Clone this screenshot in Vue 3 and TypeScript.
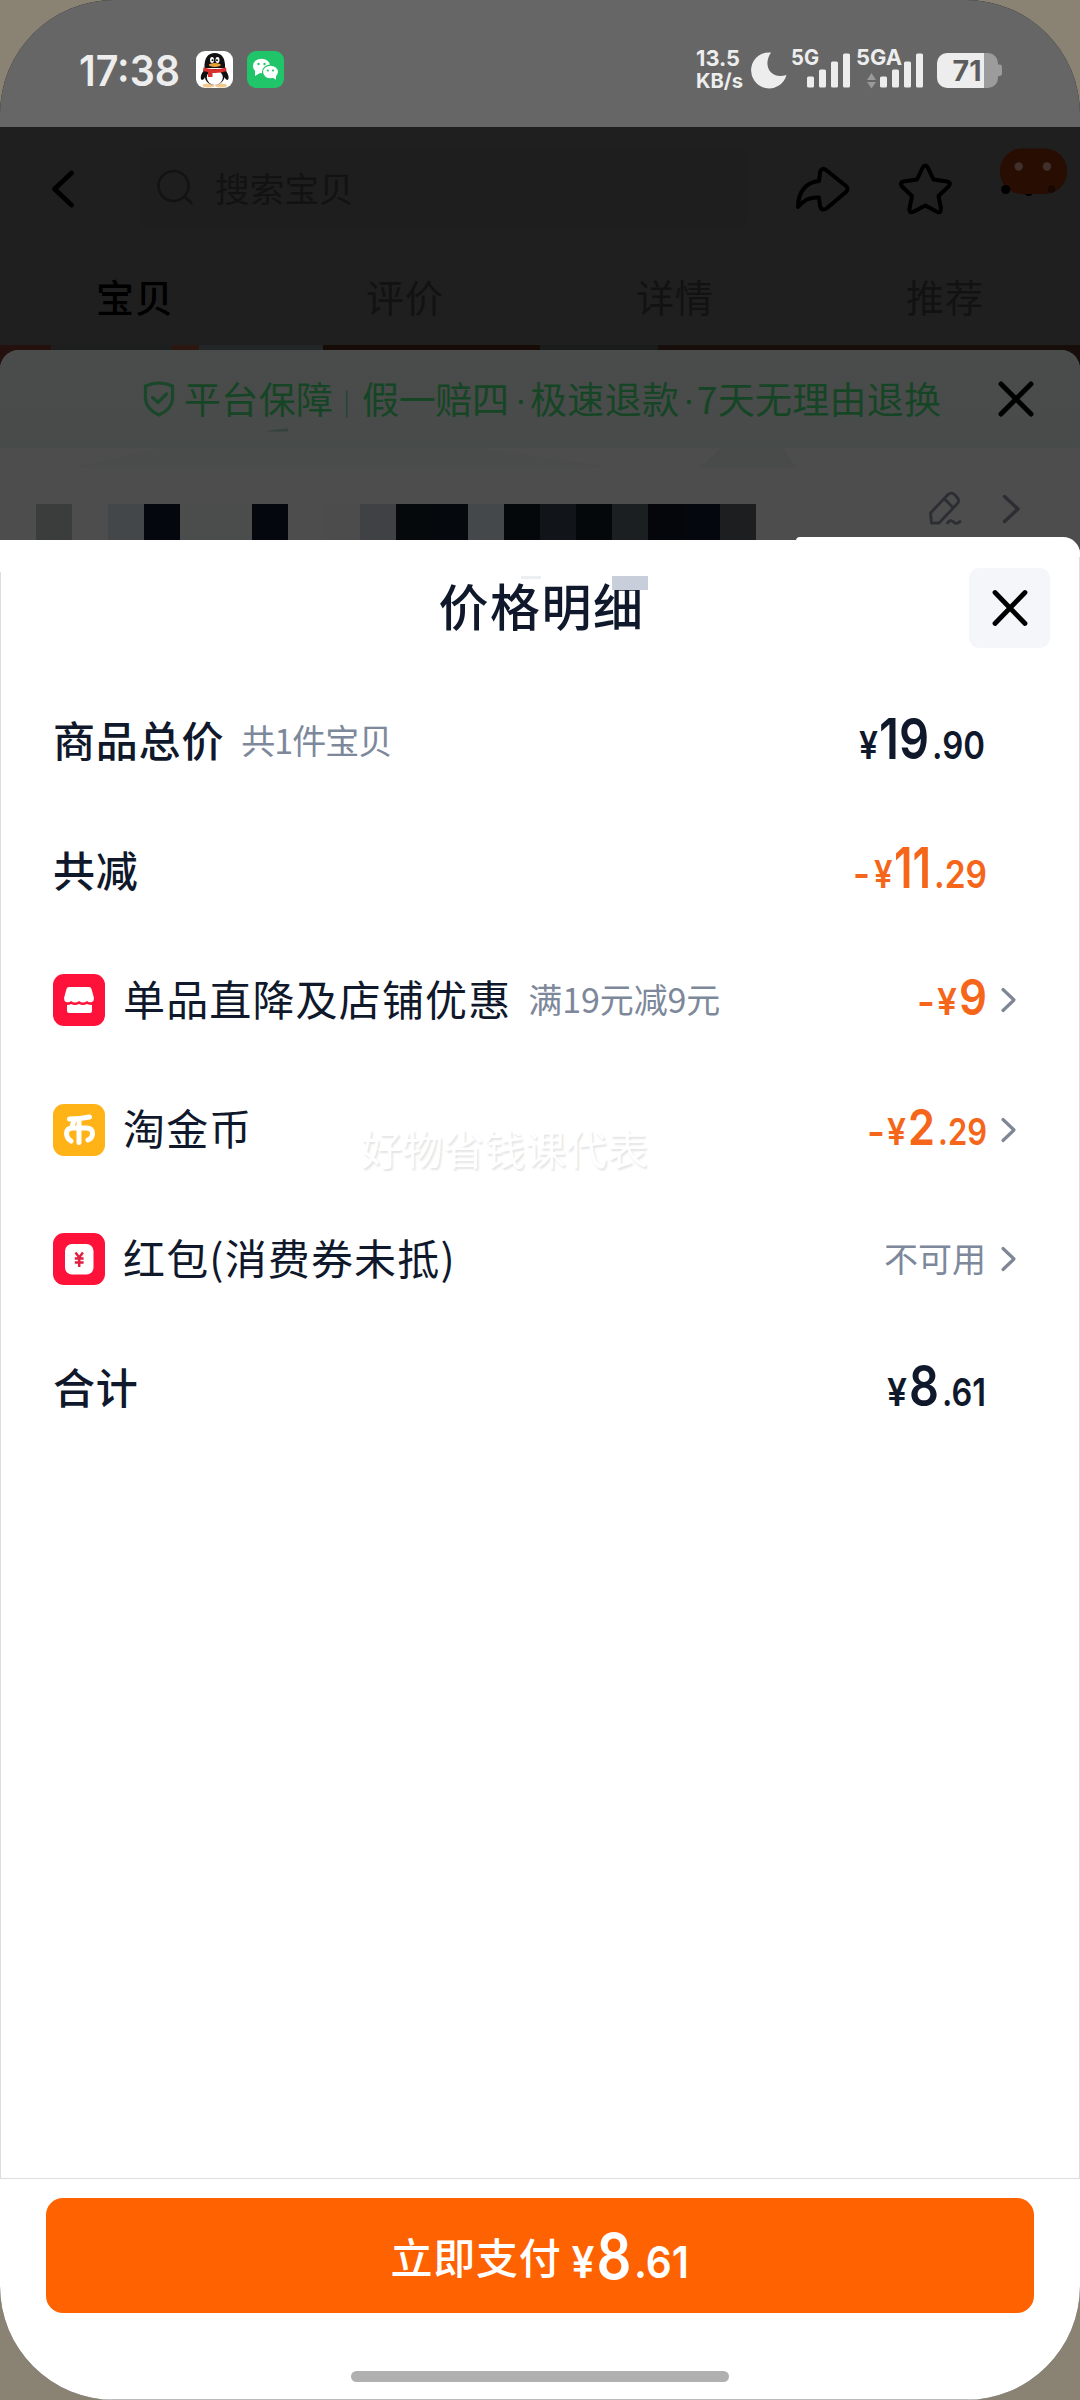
<script setup lang="ts">
interface Part {
  t: string
  x: number
  size: number
  len: number
}
interface Row {
  label: string
  note?: string
  noteGap?: string
  icon?: 'shop' | 'coin' | 'packet'
  strong?: boolean
  accent?: boolean
  arrow?: boolean
  state?: string
  base: number
  parts: Part[]
}

const tabs: string[] = ['宝贝', '评价', '详情', '推荐']

// x offsets of amount parts are measured inside a 150px wide slot
const rows: Row[] = [
  {
    label: '商品总价', note: '共1件宝贝', noteGap: '-0.9px', strong: true, base: 46.5,
    parts: [
      { t: '¥', x: 19, size: 38, len: 19 },
      { t: '19', x: 39, size: 56, len: 50 },
      { t: '.90', x: 92, size: 38, len: 53 }
    ]
  },
  {
    label: '共减', strong: true, accent: true, base: 46.5,
    parts: [
      { t: '-', x: 13, size: 38, len: 17 },
      { t: '¥', x: 34, size: 38, len: 18.5 },
      { t: '11', x: 54, size: 56, len: 37 },
      { t: '.29', x: 94, size: 38, len: 53 }
    ]
  },
  {
    label: '单品直降及店铺优惠', note: '满19元减9元', noteGap: '-0.1px', icon: 'shop', accent: true, arrow: true, base: 44.5,
    parts: [
      { t: '-', x: 77, size: 37, len: 18 },
      { t: '¥', x: 97, size: 37, len: 20 },
      { t: '9', x: 119, size: 50, len: 28 }
    ]
  },
  {
    label: '淘金币', icon: 'coin', accent: true, arrow: true, base: 44.5,
    parts: [
      { t: '-', x: 27, size: 37, len: 18 },
      { t: '¥', x: 47, size: 37, len: 19 },
      { t: '2', x: 68, size: 50, len: 27 },
      { t: '.29', x: 98, size: 37, len: 49 }
    ]
  },
  { label: '红包(消费券未抵)', icon: 'packet', arrow: true, state: '不可用', base: 43, parts: [] },
  {
    label: '合计', strong: true, base: 47,
    parts: [
      { t: '¥', x: 47, size: 38, len: 20 },
      { t: '8', x: 69, size: 57, len: 30 },
      { t: '.61', x: 102, size: 38, len: 44 }
    ]
  }
]

const mosaic: string[] = [
  'transparent', '#3b3d3c', 'transparent', '#43474a', '#05070e', '#4a4d4b', '#4b4d4c', '#05070e', '#4e4d4d', '#4d4c4d',
  '#404144', '#06090c', '#05080d', '#45484b', '#05080b', '#11151a', '#05080b', '#1c1f21', '#04060b', '#05070f', '#1c1e20'
]

const bars: number[] = [11, 18, 26, 34]
</script>

<template>
  <div class="backdrop">
    <div class="phone">
      <header class="status">
        <svg class="clock" width="104" height="50" viewBox="78 45 104 50">
          <text x="79" y="85.500" font-size="42" font-weight="600" textLength="101" lengthAdjust="spacingAndGlyphs">17:38</text>
        </svg>
        <svg class="app qq" width="37" height="37" viewBox="0 0 37 37">
          <rect width="37" height="37" rx="9" fill="#fff" />
          <ellipse cx="12.500" cy="34.500" rx="6" ry="2" fill="#f2c98d" />
          <ellipse cx="25" cy="34.500" rx="6" ry="2" fill="#f2c98d" />
          <path d="M9 18C4 24 4 28 6 29c2 0 3-3 3-3 0 4 4 8 9.500 8S28 30 28.500 26c0 0 1 3 3 3 2-1 1.500-6-3-11z" fill="#111" />
          <ellipse cx="18.800" cy="26.500" rx="8" ry="7.500" fill="#fff" />
          <path d="M8.500 17C8 7 12 2 18.800 2S29.500 7 29 17z" fill="#111" />
          <ellipse cx="16" cy="9" rx="2" ry="3" fill="#fff" /><ellipse cx="21.500" cy="9" rx="2" ry="3" fill="#fff" />
          <circle cx="16.500" cy="9.300" r="1" fill="#111" /><circle cx="21" cy="9.300" r="1" fill="#111" />
          <ellipse cx="18.800" cy="14" rx="6" ry="1.900" fill="#e9a03a" />
          <path d="M7.500 16.500q11.500 3.500 22.500 0l.5 3.500q-6 2.500-14 2v4h-4.500v-5q-3-.5-5-1z" fill="#d8302c" />
        </svg>
        <svg class="app wx" width="37" height="37" viewBox="0 0 37 37">
          <rect width="37" height="37" rx="9" fill="#1fc568" />
          <ellipse cx="14.500" cy="15" rx="8.600" ry="7.300" fill="#fff" /><path d="M8 19v6l5-3z" fill="#fff" />
          <circle cx="11.500" cy="13" r="1.200" fill="#1fc568" /><circle cx="17.500" cy="13" r="1.200" fill="#1fc568" />
          <ellipse cx="23.500" cy="21" rx="8" ry="6.900" fill="#fff" stroke="#1fc568" stroke-width="1.200" /><path d="M25 26l4 2.800v-5z" fill="#fff" />
          <circle cx="20.800" cy="19.500" r="1.100" fill="#1fc568" /><circle cx="26" cy="19.500" r="1.100" fill="#1fc568" />
        </svg>
        <svg class="signals" width="312" height="50" viewBox="695 43 312 50" fill="#ededed">
          <g font-size="22" font-weight="700">
            <text x="696" y="64.500" textLength="44" lengthAdjust="spacingAndGlyphs">13.5</text>
            <text x="696" y="87" font-size="20" textLength="47" lengthAdjust="spacingAndGlyphs">KB/s</text>
            <text x="791" y="64" textLength="28" lengthAdjust="spacingAndGlyphs">5G</text>
            <text x="856" y="64" textLength="46" lengthAdjust="spacingAndGlyphs">5GA</text>
          </g>
          <path d="M771 51.500A18 18 0 1 0 786.500 74C771 79 762 65 771 51.500z" />
          <rect v-for="(h, i) in bars" :key="'a' + i" :x="807 + i * 12" :y="86.500 - h" width="7" :height="h" rx="1.500" />
          <rect v-for="(h, i) in bars" :key="'b' + i" :x="880 + i * 12" :y="86.500 - h" width="7" :height="h" rx="1.500" />
          <path d="M871.500 72l4.500 7h-9zM871.500 87.500l4.500-6.500h-9z" fill="#9a9a9a" />
          <path d="M984 52h4a10 10 0 0 1 10 10v1.500h1.500a2.500 3 0 0 1 2.500 3v5.500a2.500 3 0 0 1-2.500 3H998v2a10 10 0 0 1-10 10h-4z" fill="#9c9c9c" />
          <path d="M947 52h37v35h-37a10 10 0 0 1-10-10V62a10 10 0 0 1 10-10z" />
          <text x="952.500" y="80" font-size="29" font-weight="700" fill="#5c5c5c" textLength="29" lengthAdjust="spacingAndGlyphs">71</text>
        </svg>
      </header>

      <nav class="topbar">
        <svg class="back" width="30" height="44" viewBox="48 167 30 44" fill="none" stroke="#000" stroke-width="4.800" stroke-linecap="round" stroke-linejoin="round"><path d="M71.500 173L54.500 189l17 16" /></svg>
        <div class="search">
          <svg width="38" height="38" viewBox="156 169 38 38" fill="none" stroke="#131313" stroke-width="2.600" stroke-linecap="round"><circle cx="173.500" cy="186" r="15" /><path d="M185 197l6.500 6" /></svg>
          <span>搜索宝贝</span>
        </div>
        <svg class="actions" width="280" height="80" viewBox="790 145 280 80" fill="none" stroke="#000" stroke-width="4" stroke-linejoin="round" stroke-linecap="round">
          <path d="M798 207C798 191 807 182 819 181L820 172Q822 167 826 170L846 186Q849 189 846 192L827 208Q822 212 820 206L819 197.500C809 197 804 200 798 207z" />
          <path d="M922.500 168Q925.500 163 928 168L933.500 179.500L947 181.500Q952 182.500 948.500 186.500L938.500 196L941 208.500Q941 214 936.500 211.500L925.300 205.500L914 211.500Q909 214 909.500 208.500L912 196L902 186.500Q899 182.500 903.500 181.500L917 179.500z" />
          <g stroke="none">
            <circle cx="1028.600" cy="191.500" r="4.600" fill="#000" />
            <rect x="1000" y="148.500" width="67" height="45.500" rx="22" fill="#280d03" />
            <circle cx="1005.700" cy="189.500" r="4.600" fill="#000" />
            <circle cx="1051.500" cy="189" r="3.800" fill="#180802" />
            <circle cx="1018.700" cy="166.500" r="4.200" fill="#40302b" />
            <circle cx="1047" cy="166.500" r="4.200" fill="#40302b" />
          </g>
        </svg>
      </nav>

      <div class="tabs">
        <span v-for="(tab, i) in tabs" :key="tab" :class="{ on: i === 0 }">{{ tab }}</span>
      </div>
      <div class="peek"><i class="p1" /><i class="p2" /><i class="p3" /><i class="p4" /><i class="p5" /><i class="p6" /><i class="p7" /></div>

      <section class="order">
        <div class="guarantee">
          <svg class="shield" width="32" height="38" viewBox="143 380 32 38" fill="none" stroke="#1a472a" stroke-width="3.200" stroke-linejoin="round" stroke-linecap="round">
            <path d="M145.500 386Q159 380 172.500 386V399Q172 409 159 415Q146 409 145.500 399z" /><path d="M152.500 397.500l5.500 5 8.500-8.500" />
          </svg>
          <svg class="promise" width="766" height="60" viewBox="182 368 766 60" fill="#164525">
            <text x="184" y="412.500" font-size="37" textLength="149">平台保障</text>
            <rect x="346" y="389" width="1.600" height="28" fill="#2a4535" />
            <text x="362" y="412.500" font-size="37" textLength="147">假一赔四</text>
            <circle cx="521" cy="401" r="2.200" />
            <text x="530" y="412.500" font-size="37" textLength="149">极速退款</text>
            <circle cx="689" cy="401" r="2.200" />
            <text x="697" y="412.500" font-size="37" textLength="244">7天无理由退换</text>
          </svg>
          <svg class="x" width="40" height="40" viewBox="-20 -20 40 40" stroke="#000" stroke-width="5" stroke-linecap="round"><path d="M-15-15L15 15M15-15L-15 15" /></svg>
        </div>
        <svg class="shapes" width="1080" height="42" viewBox="0 427 1080 42">
          <path d="M265 431.500l8-1.500 15-1.500v3z" fill="#34413d" />
          <path d="M74 467.500L160 448H482L607 467.500z" fill="#4a4c4b" />
          <path d="M700 467.500L722 448H783L796 467.500z" fill="#484b4a" />
        </svg>
        <div class="address">
          <div class="mosaic"><i v-for="(c, i) in mosaic" :key="i" :style="{ background: c }" /></div>
          <svg class="edit" width="96" height="36" viewBox="926 490 96 36" fill="none" stroke="#2c2e33" stroke-width="2.800" stroke-linecap="round" stroke-linejoin="round">
            <path d="M930.500 513L948 494.500Q951.500 491.500 955 495L957.500 498Q960 501 957 504L939 523H931.500zM945 499.500l8 8M947.500 523q3-4 6-1t6.500-.5" />
            <path d="M1004.500 496.500L1018 509l-13.500 12.500" stroke-width="3.400" />
          </svg>
        </div>
      </section>

      <main class="sheet">
        <div class="head">
          <h1>价格明细</h1>
          <i class="patch" /><i class="fleck" />
          <button class="close" type="button" aria-label="关闭">
            <svg width="40" height="40" viewBox="-20 -20 40 40" stroke="#000" stroke-width="4.800" stroke-linecap="round"><path d="M-15-15.500L15 15.500M15-15.500L-15 15.500" /></svg>
          </button>
        </div>

        <div v-for="row in rows" :key="row.label" class="row" :class="{ strong: row.strong, accent: row.accent }">
          <svg v-if="row.icon === 'shop'" class="badge" width="52" height="52" viewBox="0 0 52 52">
            <rect width="52" height="52" rx="11" fill="#ff1239" />
            <path d="M16 13h20q2 0 2.500 2l2.500 9q0 3-2 4-3 1-5-1-4 3-8 0-4 3-8 0-2 2-5 1-2-1-2-4l2.500-9q.5-2 2.500-2zM14 31q3 0 4-1 4 2 8 0 4 2 8 0 2 1 5 1v6q0 2-2 2H16q-2 0-2-2z" fill="#fff" />
          </svg>
          <svg v-else-if="row.icon === 'coin'" class="badge" width="52" height="52" viewBox="0 0 52 52">
            <rect width="52" height="52" rx="11" fill="#ffb317" />
            <g fill="none" stroke="#fff" stroke-width="5" stroke-linecap="round"><path d="M16.500 15Q27 15 36.500 13M26 15v23.500M18 37Q13.500 34 13.500 29.500 13.500 24 20 24H33Q39.500 24 39.500 29.500 39.500 34 35 36M21 16l-2 7" /></g>
          </svg>
          <svg v-else-if="row.icon === 'packet'" class="badge" width="52" height="52" viewBox="0 0 52 52">
            <rect width="52" height="52" rx="11" fill="#ff1239" /><rect x="12" y="11" width="28.500" height="30.500" rx="7" fill="#fff" />
            <path d="M22.500 19.500l3.700 5 3.700-5M26.200 24.500v9.500M21.800 25.500h8.800M21.800 29.500h8.800" fill="none" stroke="#e02142" stroke-width="2.500" />
          </svg>
          <span class="label">{{ row.label }}</span>
          <span v-if="row.note" class="note" :style="{ letterSpacing: row.noteGap }">{{ row.note }}</span>
          <span class="gap" />
          <span v-if="row.state" class="state">{{ row.state }}</span>
          <svg v-else class="amount" width="150" height="60" viewBox="0 0 150 60">
            <text v-for="p in row.parts" :key="p.t" :x="p.x" :y="row.base" :font-size="p.size" :textLength="p.len" lengthAdjust="spacingAndGlyphs">{{ p.t }}</text>
          </svg>
          <span class="tail">
            <svg v-if="row.arrow" width="18" height="28" viewBox="0 0 18 28" fill="none" stroke="#7f8696" stroke-width="3.200" stroke-linecap="round" stroke-linejoin="round"><path d="M3 3.500L14 14 3 24.500" /></svg>
          </span>
        </div>
        <div class="watermark">好物省钱课代表</div>
      </main>

      <footer class="foot">
        <button class="pay" type="button">
          <span>立即支付</span>
          <svg width="122" height="70" viewBox="570 2220 122 70" fill="#fff">
            <text x="571.500" y="2277" font-size="44" textLength="23" lengthAdjust="spacingAndGlyphs">¥</text>
            <text x="596.500" y="2277.500" font-size="63" textLength="35" lengthAdjust="spacingAndGlyphs">8</text>
            <text x="634" y="2277" font-size="44" textLength="55" lengthAdjust="spacingAndGlyphs">.61</text>
          </svg>
        </button>
        <div class="home" />
      </footer>
    </div>
  </div>
</template>

<style>
body { margin: 0; background: #8a8272; }
</style>

<style scoped>
* { box-sizing: border-box; }
.backdrop { width: 1080px; height: 2400px; background: #8a8273; font-family: "Noto Sans CJK SC", sans-serif; }
.phone { width: 1080px; height: 2400px; border-radius: 114px; overflow: hidden; background: #1f1f1f; display: flex; flex-direction: column; }
svg { display: block; flex: none; overflow: visible; }
i { display: block; }

.status { height: 127px; background: #666; display: flex; align-items: center; padding: 10px 73px 0 78px; font-family: Inter, sans-serif; }
.status .clock { fill: #ededed; margin-top: 3px; }
.qq { margin-left: 14px; margin-top: 2px; }
.wx { margin-left: 14px; margin-top: 2px; }
.signals { margin-left: auto; }

.topbar { height: 124px; display: flex; align-items: center; padding-left: 48px; }
.search { width: 606px; height: 80px; margin-left: 62px; padding-left: 16px; background: #1e1e1e; border-radius: 12px; display: flex; align-items: center; color: #121212; font-size: 34.500px; }
.search svg { margin-top: -2px; }
.search span { margin-left: 21px; margin-top: -5px; letter-spacing: .2px; }
.actions { margin-left: 44px; margin-top: -8px; }

.tabs { height: 94px; display: flex; color: #121212; font-size: 38px; line-height: 89px; letter-spacing: 1px; }
.tabs span { width: 270px; text-align: center; }
.tabs .on { color: #000; font-weight: 500; }

.peek { height: 5px; display: flex; }
.peek i { height: 24px; flex: none; }
.p1 { width: 51px; background: #24110e; }
.p2 { width: 121px; background: #1d1e1e; }
.p3 { width: 27px; background: #2c1710; }
.p4 { width: 124px; background: #222626; }
.p5 { width: 217px; background: #170b08; }
.p6 { width: 118px; background: #1a1b1b; }
.p7 { width: 422px; background: #170e0c; }

.order { position: relative; height: 190px; flex: none; background: #4d4d4d; border-radius: 19px 19px 0 0; overflow: hidden; display: flex; flex-direction: column; }
.guarantee { height: 98px; flex: none; background: linear-gradient(#4a4c4b, #474b4a); display: flex; align-items: center; padding-left: 143px; }
.promise { margin-left: 7px; }
.guarantee .x { margin-left: 48px; }
.shapes { margin-top: -21px; }
.address { display: flex; align-items: flex-end; justify-content: space-between; flex: 1; padding-right: 58px; }
.mosaic { display: flex; }
.mosaic i { width: 36px; height: 36px; }
.edit { margin-bottom: 14px; }

.sheet { position: relative; flex: 1; background: #fff; border-left: 1px solid #ddd; border-right: 1px solid #ddd; border-top-right-radius: 14px; box-shadow: 14px -14px 0 -14px #4d4d4d; display: flex; flex-direction: column; }
.sheet::before { content: ""; position: absolute; top: -3px; left: 795px; right: -1px; height: 20px; background: #fff; border-radius: 4px 17px 0 0; }
.sheet::after { content: ""; position: absolute; top: 0; left: -1px; width: 1px; height: 32px; background: #fff; }
.head { position: relative; height: 137px; flex: none; display: flex; justify-content: center; padding-top: 27px; }
h1 { margin: 0 -3px 0 0; font-size: 50px; line-height: 74px; font-weight: 500; color: #10182b; letter-spacing: 1.500px; }
.patch { position: absolute; left: 611px; top: 36px; width: 36px; height: 14px; background: #c9cedb; }
.fleck { position: absolute; left: 520px; top: 36px; width: 20px; height: 3px; background: #eceff1; }
.close { position: absolute; left: 968px; top: 28px; width: 81px; height: 80px; border: 0; border-radius: 10px; background: #f4f6fa; display: flex; align-items: center; justify-content: center; padding: 0; }

.row { height: 129.400px; flex: none; display: flex; align-items: center; padding: 0 61px 0 52px; color: #10182b; }
.badge { margin-right: 18px; }
.label { font-size: 42px; letter-spacing: 1.150px; white-space: nowrap; margin-top: -6px; }
.strong .label { font-weight: 500; letter-spacing: .8px; }
.note { font-size: 34px; color: #7d889b; margin-left: 17px; margin-top: -4px; white-space: nowrap; }
.gap { flex: 1; }
.amount { fill: #10182b; font-family: Inter, sans-serif; font-weight: 600; }
.accent .amount { fill: #f5661a; }
.state { font-size: 34px; color: #7d889b; margin-right: 4px; margin-top: -3px; }
.tail { width: 28px; padding-left: 10px; }
.watermark { position: absolute; left: 360px; top: 577px; font-size: 41px; line-height: 60px; color: #fff; text-shadow: 1.500px 1.500px 2px rgba(0, 0, 0, .11); }

.foot { height: 222px; flex: none; background: #fff; border-top: 1px solid #ddd; border-bottom: 1px solid #bbb; display: flex; flex-direction: column; align-items: center; }
.pay { width: 988px; height: 115px; margin-top: 19px; border: 0; border-radius: 17px; background: #ff6200; color: #fff; display: flex; align-items: center; justify-content: center; padding: 0; font-family: inherit; font-size: 42px; font-weight: 500; letter-spacing: .8px; }
.pay span { margin-left: 2px; }
.pay svg { margin-left: 8px; font-family: Inter, sans-serif; font-weight: 600; letter-spacing: 0; }
.home { width: 378px; height: 11px; margin-top: 58px; border-radius: 6px; background: #b0b0b0; }
</style>
